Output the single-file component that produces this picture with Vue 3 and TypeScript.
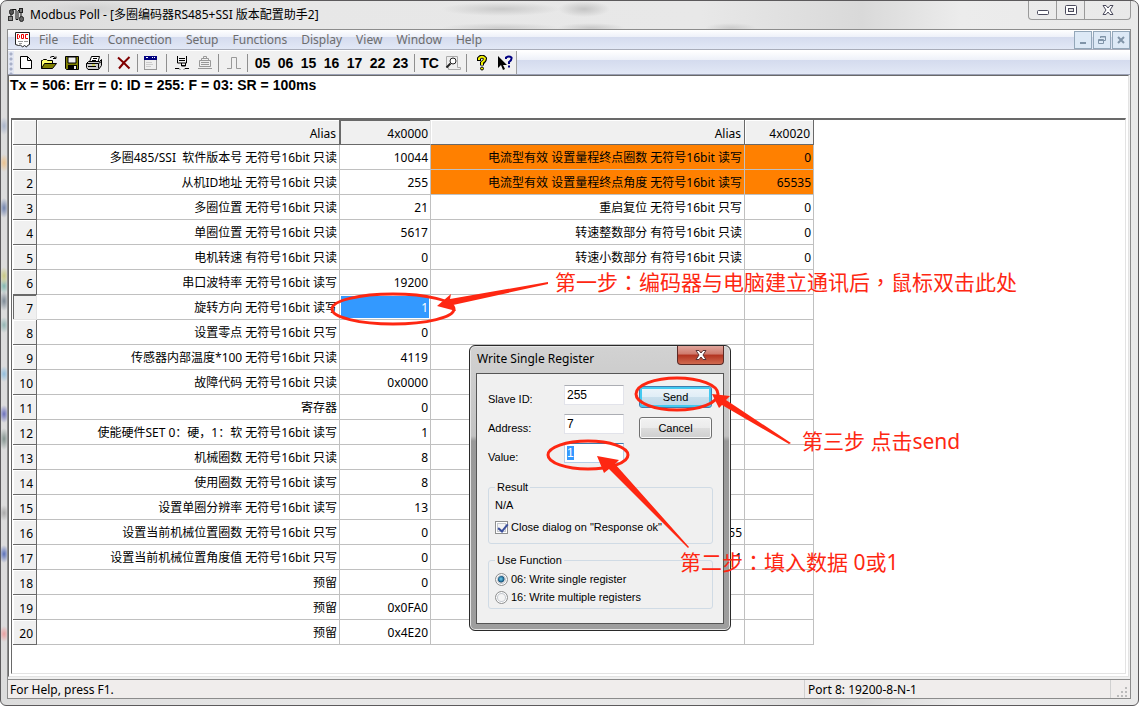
<script setup lang="ts">
import { ref } from 'vue'

interface Row {
  alias: string
  value: string
  alias2: string
  value2: string
  hot?: boolean
}

const menus: string[] = ['File', 'Edit', 'Connection', 'Setup', 'Functions', 'Display', 'View', 'Window', 'Help']
const functionCodes: string[] = ['05', '06', '15', '16', '17', '22', '23']

const row = (alias: string, value: string, alias2 = '', value2 = '', hot = false): Row => ({ alias, value, alias2, value2, hot })

const rows: Row[] = [
  row('多圈485/SSI  软件版本号 无符号16bit 只读', '10044', '电流型有效 设置量程终点圈数 无符号16bit 读写', '0', true),
  row('从机ID地址 无符号16bit 只读', '255', '电流型有效 设置量程终点角度 无符号16bit 读写', '65535', true),
  row('多圈位置 无符号16bit 只读', '21', '重启复位 无符号16bit 只写', '0'),
  row('单圈位置 无符号16bit 只读', '5617', '转速整数部分 有符号16bit 只读', '0'),
  row('电机转速 有符号16bit 只读', '0', '转速小数部分 有符号16bit 只读', '0'),
  row('串口波特率 无符号16bit 读写', '19200'),
  row('旋转方向 无符号16bit 读写', '1'),
  row('设置零点 无符号16bit 只写', '0'),
  row('传感器内部温度*100 无符号16bit 只读', '4119'),
  row('故障代码 无符号16bit 只读', '0x0000'),
  row('寄存器', '0'),
  row('使能硬件SET 0：硬，1：软 无符号16bit 读写', '1'),
  row('机械圈数 无符号16bit 只读', '8'),
  row('使用圈数 无符号16bit 读写', '8'),
  row('设置单圈分辨率 无符号16bit 读写', '13'),
  row('设置当前机械位置圈数 无符号16bit 只写', '0', '255'),
  row('设置当前机械位置角度值 无符号16bit 只写', '0', '1'),
  row('预留', '0'),
  row('预留', '0x0FA0'),
  row('预留', '0x4E20'),
]

const selectedRow = 6
const slaveId = ref('255')
const address = ref('7')
const registerValue = ref('1')
const closeOnOk = ref(true)
const writeMode = ref('06')
</script>

<template>
  <div class="window">
    <header class="titlebar">
      <svg class="app-icon" width="17" height="16" viewBox="0 0 17 16">
        <path d="M3 6v6M4 2.500h4v10h2V4M10 3.500h3v8" fill="none" stroke="#111" />
        <rect x="1.500" y="2.500" width="4" height="5" rx="2" fill="#555" stroke="#222" />
        <rect x=".5" y="9.500" width="4" height="4" fill="#888" stroke="#333" />
        <rect x="11.500" y="1.500" width="3" height="4" fill="#777" stroke="#222" />
        <rect x="11.500" y="9.500" width="4" height="5" rx="2" fill="#666" stroke="#222" />
      </svg>
      <h1>Modbus Poll - [多圈编码器RS485+SSI 版本配置助手2]</h1>
      <div class="caption-buttons">
        <button aria-label="Minimize">
          <svg width="14" height="14" viewBox="0 0 14 14"><rect x="1.500" y="7.500" width="11" height="4" rx="1" fill="#fff" stroke="#4a4a5c" /></svg>
        </button>
        <button aria-label="Restore">
          <svg width="14" height="14" viewBox="0 0 14 14"><rect x="1.500" y="2.500" width="11" height="9" rx="1" fill="#fff" stroke="#4a4a5c" /><rect x="4.500" y="5.500" width="5" height="3" fill="#ddd" stroke="#4a4a5c" /></svg>
        </button>
        <button class="wide" aria-label="Close">
          <svg width="14" height="14" viewBox="0 0 14 14"><path d="M2 2.500h3l2 2.500 2-2.500h3L9 7l3 4.500H9L7 9l-2 2.500H2L5 7z" fill="#fff" stroke="#4a4a5c" /></svg>
        </button>
      </div>
    </header>

    <main class="client">
      <nav class="menubar">
        <svg class="doc-icon" width="17" height="16" viewBox="0 0 17 16">
          <path d="M1.500.5h14v12l-2 1-1 1.500-2-1.500-2 1.500-2-2-2 .5-3-1z" fill="#fff" stroke="#222" />
          <path d="M3.500 2v5M3 2.500h1.500l1 1v2l-1 1H3M7.500 2.500h2v4h-2zM14 2.500h-2.500v4H14" fill="none" stroke="#e00" />
          <path d="M4 9.500h5M10 9.500h4M5 11.500h3" stroke="#999" />
        </svg>
        <button v-for="m in menus" :key="m">{{ m }}</button>
        <div class="mdi-buttons">
          <button aria-label="Minimize document"><svg width="10" height="10"><path d="M2 7h6v2H2z" fill="#8094a8" /></svg></button>
          <button aria-label="Restore document"><svg width="10" height="10"><path d="M3.500 3V1.500h5v4H7M1.500 4.500h5v4h-5zM1 5.500h6M3 2h6" fill="none" stroke="#8094a8" /></svg></button>
          <button aria-label="Close document"><svg width="10" height="10"><path d="M2 2l6 6M8 2L2 8" stroke="#8094a8" stroke-width="2" /></svg></button>
        </div>
      </nav>

      <div class="toolstrip">
        <div class="toolbar">
          <span class="grip"></span>
          <button aria-label="New"><svg width="16" height="16" viewBox="0 0 16 16"><path d="M2.500 1.500h7l4 4v8h-11zM9.500 1.500v4h4" fill="#fff" stroke="#000" /></svg></button>
          <button aria-label="Open"><svg width="16" height="16" viewBox="0 0 16 16"><path d="M.5 13.500v-8h1l1-1h3l1 1h5v3" fill="#ffff70" stroke="#000" /><path d="M.5 13.500l3-5h12l-4 5z" fill="#808000" stroke="#000" /><path d="M9 2.500l2-1h2l1.500 2M12 3.500h3v-2" fill="none" stroke="#000" /></svg></button>
          <button aria-label="Save"><svg width="16" height="16" viewBox="0 0 16 16"><path d="M1.500 1.500h13v13h-12l-1-1z" fill="#808000" stroke="#000" /><path d="M4 2h8v6H4z" fill="#f0f0f0" stroke="#000" /><path d="M4 10h9v4H4z" /><path d="M10 11h2v3h-2z" fill="#eee" /></svg></button>
          <button aria-label="Print"><svg width="17" height="16" viewBox="0 0 17 16"><path d="M3.500 7l2-5.500h8L12 7" fill="#fff" stroke="#000" /><path d="M7 3.500h4M6 5.500h4" stroke="#000" /><path d="M.5 8.500l2-2h11l2-2v6l-3 4H2l-1.500-2z" fill="#ccc" stroke="#000" /><path d="M.5 8.500h12v5M12.500 8.500l3-2M2 11.500h8" fill="none" stroke="#000" /><path d="M6 10h3" stroke="#cc0" /></svg></button>
          <span class="sep"></span>
          <button aria-label="Delete"><svg width="16" height="16" viewBox="0 0 16 16"><path d="M2 2.500l6 5.500 5.500 5.500M13.500 2L8 7.500l-5 6" fill="none" stroke="#800000" stroke-width="2" /></svg></button>
          <span class="sep"></span>
          <button class="left" aria-label="Display definition"><svg width="14" height="16" viewBox="0 0 14 16" shape-rendering="crispEdges"><path d="M.5 1.500h12v13H.5z" fill="#eee" stroke="#999" /><path d="M0 1h13v4H0z" fill="#000080" /><path d="M2 2h2v1H2zM8 2h1v1H8zM10 2h1v1h-1z" fill="#fff" /><path d="M2 7.500h6M2 9.500h7M2 11.500h5" stroke="#ccc" /></svg></button>
          <span class="sep"></span>
          <button aria-label="Connect"><svg width="16" height="16" viewBox="0 0 16 16"><path d="M3.500 1v7h9V1M5 3.500h6M5 5.500h6M7.500 8v3h4V8M7 10.500h4" fill="none" stroke="#000" /><path d="M1 13.500h4l1 1M15 13.500h-4l-1 1" fill="none" stroke="#000" /></svg></button>
          <button aria-label="Disconnect"><svg width="16" height="16" viewBox="0 0 16 16"><path d="M6.500 3V1.500h3V3M4.500 3.500h7v2h2v6h-11v-6h2zM4 5.500h8M4 7.500h8M4 9.500h8M1 13.500h14" fill="none" stroke="#999" /></svg></button>
          <span class="sep"></span>
          <button aria-label="Pulse"><svg width="16" height="16" viewBox="0 0 16 16"><path d="M1 13.500h4.500V2.500h5v11H15" fill="none" stroke="#999" /></svg></button>
          <span class="sep"></span>
          <button v-for="c in functionCodes" :key="c">{{ c }}</button>
          <span class="sep"></span>
          <button>TC</button>
          <button aria-label="Communication traffic"><svg width="16" height="16" viewBox="0 0 16 16"><path d="M1.500 1.500h11v11h3v2h-12v-2h-2z" fill="#eee" stroke="#aaa" /><circle cx="8" cy="6" r="3" fill="#fff" stroke="#222" /><path d="M5.500 8.500L1.500 12.500" stroke="#222" stroke-width="2" /></svg></button>
          <span class="sep"></span>
          <button aria-label="Help"><svg width="16" height="16" viewBox="0 0 16 16"><path d="M5 6V3.500Q8-.5 11 3.500 11 6 8 8v2.500" fill="none" stroke="#000" stroke-width="4" /><path d="M5 5V3.500Q8 0 11 3.500 11 5.500 8 7.500v2.500" fill="none" stroke="#ee0" stroke-width="2" /><circle cx="8" cy="13.500" r="1.500" fill="#ee0" stroke="#000" /></svg></button>
          <button aria-label="Context help"><svg width="16" height="16" viewBox="0 0 16 16"><path d="M1 1v12l3-3 2 5 2-1-2-4h4z" /><path d="M9 4V2.500Q12 .5 14.500 2.500 15 5 12 7v2M12 10.500v2" fill="none" stroke="#000080" stroke-width="2" /></svg></button>
        </div>
      </div>

      <section class="document">
        <p class="traffic">Tx = 506: Err = 0: ID = 255: F = 03: SR = 100ms</p>
        <div class="sheet">
          <table>
            <colgroup><col class="c-num" /><col class="c-alias" /><col class="c-val" /><col class="c-alias2" /><col class="c-val2" /></colgroup>
            <thead>
              <tr><th></th><th>Alias</th><th class="pressed">4x0000</th><th>Alias</th><th>4x0020</th></tr>
            </thead>
            <tbody>
              <tr v-for="(r, i) in rows" :key="i">
                <th :class="{ current: i === selectedRow }">{{ i + 1 }}</th>
                <td>{{ r.alias }}</td>
                <td :class="{ selected: i === selectedRow }">{{ r.value }}</td>
                <td :class="{ hot: r.hot }">{{ r.alias2 }}</td>
                <td :class="{ hot: r.hot }">{{ r.value2 }}</td>
              </tr>
            </tbody>
          </table>
        </div>
      </section>

      <footer class="statusbar">
        <span class="help">For Help, press F1.</span>
        <span class="port">Port 8: 19200-8-N-1</span>
        <svg width="12" height="12" viewBox="0 0 12 12"><path d="M9 2h2v2H9zM9 6h2v2H9zM9 10h2v2H9zM5 6h2v2H5zM5 10h2v2H5zM1 10h2v2H1z" fill="#bbb" /></svg>
      </footer>
    </main>

    <section class="dialog" role="dialog" aria-labelledby="dialog-title">
      <div class="dialog-title">
        <h2 id="dialog-title">Write Single Register</h2>
        <button aria-label="Close dialog"><svg width="14" height="12" viewBox="0 0 14 12"><path d="M2 1.500h3l2 2.500 2-2.500h3L9 6l3 4.500H9L7 8l-2 2.500H2L5 6z" fill="#fff" stroke="#5a3535" /></svg></button>
      </div>
      <form class="dialog-body" @submit.prevent>
        <div class="top">
          <div class="fields">
            <label for="slave">Slave ID:</label><input id="slave" v-model="slaveId" type="text" />
            <label for="addr">Address:</label><input id="addr" v-model="address" type="text" />
            <label for="val">Value:</label><input id="val" v-model="registerValue" class="active" type="text" />
          </div>
          <div class="actions">
            <button class="default" type="submit">Send</button>
            <button type="button">Cancel</button>
          </div>
        </div>
        <fieldset class="result">
          <legend>Result</legend>
          <p>N/A</p>
          <label><input v-model="closeOnOk" type="checkbox" />Close dialog on "Response ok"</label>
        </fieldset>
        <fieldset class="function">
          <legend>Use Function</legend>
          <label><input v-model="writeMode" type="radio" name="mode" value="06" />06: Write single register</label>
          <label><input v-model="writeMode" type="radio" name="mode" value="16" />16: Write multiple registers</label>
        </fieldset>
      </form>
    </section>

    <svg class="notes" width="1139" height="706" viewBox="0 0 1139 706">
      <g fill="none" stroke="#fe2712" stroke-width="3">
        <ellipse cx="393" cy="309" rx="61" ry="15" />
        <ellipse cx="677" cy="394" rx="41" ry="16" />
        <ellipse cx="588" cy="455" rx="40" ry="14" />
      </g>
      <g fill="#fe2712">
        <path d="M437 306L451 294 450 299 548 282 548 284 453 305 456 311z" />
        <path d="M712 394L730 396 726 400 791 443 789 444 722 405 719 408z" />
        <path d="M597 456L619 460 615 464 689 547 688 548 609 469 604 473z" />
        <text x="555" y="290">第一步<tspan class="mark">：</tspan>编码器与电脑建立通讯后<tspan class="mark">，</tspan>鼠标双击此处</text>
        <text x="802" y="449">第三步 点击send</text>
        <text x="680" y="570">第二步<tspan class="mark">：</tspan>填入数据 0或1</text>
      </g>
    </svg>
  </div>
</template>

<style>
body {
  margin: 0;
  background: #fff;
}
</style>

<style scoped>
* {
  box-sizing: border-box;
}
.window {
  position: relative;
  display: flex;
  flex-direction: column;
  min-height: 100vh;
  padding: 0 7px 6px 6px;
  border: 1px solid #5c5a5c;
  border-radius: 7px 7px 6px 6px;
  overflow: hidden;
  font: 12px/16px "Noto Sans", "Noto Sans CJK SC", sans-serif;
  color: #000;
  background:
    radial-gradient(ellipse 60px 7px at 500px 8px, #c9c9c9, transparent),
    radial-gradient(ellipse 26px 8px at 583px 8px, #c4c4c4, transparent),
    radial-gradient(ellipse 60px 5px at 500px 27px, #cdcdcd, transparent),
    radial-gradient(ellipse 34px 5px at 590px 27px, #c9c9c9, transparent),
    radial-gradient(ellipse 26px 5px at 730px 27px, #cdcdcd, transparent),
    radial-gradient(ellipse 50px 8px at 90px 8px, #d0d0d0, transparent),
    radial-gradient(5px 9px at 3px 125px, #a9b4ca, transparent),
    radial-gradient(5px 9px at 3px 162px, #ecc28e, transparent),
    radial-gradient(5px 10px at 3px 207px, #7183ad, transparent),
    radial-gradient(5px 9px at 3px 275px, #c9c982, transparent),
    radial-gradient(5px 8px at 3px 285px, #82b8b0, transparent),
    radial-gradient(5px 10px at 3px 300px, #7c8995, transparent),
    radial-gradient(5px 8px at 3px 324px, #93b6b4, transparent),
    radial-gradient(5px 8px at 3px 373px, #91bedd, transparent),
    radial-gradient(5px 9px at 3px 413px, #6b70bd, transparent),
    radial-gradient(5px 11px at 3px 438px, #83938f, transparent),
    radial-gradient(5px 8px at 3px 512px, #aaa, transparent),
    radial-gradient(5px 9px at 3px 553px, #5a70ba, transparent),
    radial-gradient(5px 8px at 3px 633px, #eaa0a0, transparent),
    linear-gradient(90deg, #dcdcdc 0, #e7e7e7 300px, #e8e8e8 700px, #d9d9d9 860px, #ececec 960px, #e9e9e9);
}
button {
  padding: 0;
  border: 0;
  background: none;
  font: inherit;
  color: inherit;
}
h1,
h2,
p {
  margin: 0;
  font: inherit;
}
.titlebar {
  display: flex;
  align-items: center;
  height: 28px;
  padding-left: 1px;
}
.titlebar h1 {
  margin-left: 5px;
  flex: 1;
}
.caption-buttons {
  display: flex;
  align-self: flex-start;
  height: 19px;
  border: 1px solid #9a9a9a;
  border-top: 0;
  border-radius: 0 0 4px 4px;
}
.caption-buttons button {
  display: flex;
  align-items: center;
  justify-content: center;
  width: 28px;
  border-right: 1px solid #9a9a9a;
}
.caption-buttons .wide {
  width: 45px;
  border-right: 0;
}
.client {
  flex: 1;
  display: flex;
  flex-direction: column;
  border: 1px solid #8c8c8c;
  background: #f0f0f0;
}
.menubar {
  display: flex;
  align-items: center;
  height: 20px;
  padding-left: 6px;
  border-bottom: 1px solid #a9adba;
  background: linear-gradient(#fff 0, #eef1f9 35%, #d4dbee 36%, #e2e8f6 100%);
  color: #6d6d6d;
}
.doc-icon {
  margin-right: 1px;
}
.menubar > button {
  padding: 1px 7px 0;
}
.mdi-buttons {
  display: flex;
  gap: 1px;
  margin-left: auto;
}
.mdi-buttons button {
  display: flex;
  align-items: center;
  justify-content: center;
  width: 18px;
  height: 18px;
  border: 1px solid #93a7b9;
  background: #dde9f6;
}
.toolstrip {
  display: flex;
  height: 25px;
  border-top: 1px solid #fff;
  border-bottom: 1px solid #9aa0b4;
  background: linear-gradient(#fff 0, #eef1f9 38%, #d4dbee 39%, #e2e8f6 100%);
}
.toolbar {
  display: flex;
  align-items: center;
  border-right: 1px solid #a0a0a0;
  background: #f0f0f0;
  font: bold 14px/16px "Liberation Sans", Arial, sans-serif;
}
.grip {
  width: 6px;
  align-self: stretch;
  background: radial-gradient(circle at 3px 3px, #a8b0c8 1px, transparent 2px) 0 0 / 7px 5px, #e2e6f2;
}
.toolbar button {
  display: flex;
  justify-content: center;
  width: 23px;
}
.toolbar .left {
  justify-content: flex-start;
  padding-left: 3px;
}
.sep {
  width: 1px;
  height: 18px;
  margin: 0 3px 0 2px;
  background: #8f8f8f;
}
.document {
  flex: 1;
  display: flex;
  flex-direction: column;
  margin-right: 1px;
  border: 1px solid #696969;
  border-right-color: #e3e3e3;
  border-bottom-color: #e3e3e3;
  background: #fff;
}
.traffic {
  height: 42px;
  padding-left: 1px;
  font: bold 14px/18px "Liberation Sans", Arial, sans-serif;
}
.sheet {
  flex: 1;
  margin: 0 2px 2px;
  padding-left: 1px;
  border-top: 2px solid #696969;
  border-left: 1px solid #696969;
  border-right: 1px solid #e3e3e3;
  border-bottom: 1px solid #e3e3e3;
}
table {
  table-layout: fixed;
  width: 801px;
  border-spacing: 0;
}
.c-num { width: 24px; }
.c-alias { width: 303px; }
.c-val { width: 91px; }
.c-alias2 { width: 314px; }
.c-val2 { width: 69px; }
th,
td {
  height: 25px;
  padding: 2px 2px 0;
  text-align: right;
  font-weight: 400;
  white-space: pre;
  border-right: 1px solid #c0c0c0;
  border-bottom: 1px solid #c0c0c0;
}
th {
  padding: 4px 3px 0;
  background: #f0f0f0;
  border-right-color: #696969;
  border-bottom-color: #696969;
  box-shadow: inset 1px 1px #fff;
}
thead .pressed {
  padding-right: 2px;
  border-right-color: #e3e3e3;
  box-shadow: inset 1px 1px #696969;
}
tbody .current {
  border-right-color: #e3e3e3;
  border-bottom-color: #e3e3e3;
  box-shadow: inset 1px 1px #696969;
}
.hot {
  background: #ff8000;
}
.selected {
  color: #fff;
  background: #3399ff;
  box-shadow: inset 0 0 0 1px #fff;
}
.statusbar {
  display: flex;
  align-items: center;
  height: 19px;
  margin-top: 2px;
  border-top: 1px solid #8c8c8c;
  background: #f0edec;
}
.help {
  flex: 1;
  padding: 2px 0 0 2px;
}
.port {
  width: 307px;
  padding: 2px 0 0 3px;
  border-left: 1px solid #d0d0d0;
  border-right: 1px solid #d0d0d0;
}
.statusbar svg {
  align-self: flex-end;
  margin: 0 2px 1px 5px;
}
.dialog {
  position: absolute;
  left: 468px;
  top: 344px;
  width: 262px;
  padding: 0 6px 6px;
  border: 1px solid #2a2a2a;
  border-radius: 6px;
  background: linear-gradient(#d2d2d2, #c2c2c2 90px, #999 95px, #9e9e9e);
  box-shadow: inset 0 0 0 1px #e6e6e6;
  font: 11px/14px "Liberation Sans", Arial, sans-serif;
}
.dialog-title {
  display: flex;
  justify-content: space-between;
  height: 27px;
  font: 12px/16px "Noto Sans", sans-serif;
}
.dialog-title h2 {
  padding: 5px 0 0 1px;
}
.dialog-title button {
  display: flex;
  align-items: center;
  justify-content: center;
  width: 47px;
  height: 19px;
  border: 1px solid #5a2a26;
  border-top: 0;
  border-radius: 0 0 4px 4px;
  background: linear-gradient(#e0a59c, #cf7a6c 45%, #b23320 50%, #d06a50);
}
.dialog-body {
  padding: 11px 11px 14px;
  border: 1px solid #555;
  background: #f0f0f0;
}
.top {
  display: flex;
  justify-content: space-between;
}
.fields {
  display: grid;
  grid-template-columns: 76px 60px;
  grid-auto-rows: 20px;
  row-gap: 9px;
}
.fields label {
  padding-top: 7px;
}
.fields input {
  width: 60px;
  height: 20px;
  padding: 0 2px;
  border: 1px solid #e2e3ea;
  border-top-color: #abadb3;
  background: #fff;
  font: 12px/14px "Liberation Sans", Arial, sans-serif;
  color: #000;
}
.fields .active {
  border-color: #b5cfe7;
  border-top-color: #3d7bad;
  color: #fff;
  background: linear-gradient(#3399ff, #3399ff) 2px 2px / 7px 14px no-repeat #fff;
}
.actions {
  display: flex;
  flex-direction: column;
  gap: 9px;
  padding-top: 1px;
}
.actions button {
  width: 73px;
  height: 22px;
  border: 1px solid #707070;
  border-radius: 3px;
  background: linear-gradient(#f2f2f2, #ebebeb 49%, #dddddd 50%, #cfcfcf);
  box-shadow: inset 0 0 0 1px #fafafa;
}
.actions .default {
  border-color: #3c7fb1;
  background: linear-gradient(#eef5fa, #e0eef7 49%, #cbe0ed 50%, #bcd6e6);
  box-shadow: inset 0 0 0 2px #43c9f0;
}
fieldset {
  display: flex;
  flex-direction: column;
  width: 225px;
  margin: 0;
  padding: 0 6px;
  border: 1px solid #d0dbe5;
  border-radius: 3px;
}
legend {
  padding: 0 2px;
}
.result {
  height: 64px;
  margin-top: 17px;
}
.result p {
  padding: 4px 0 8px;
}
.function {
  height: 56px;
  margin-top: 9px;
}
.function label {
  height: 18px;
}
.function label:first-of-type {
  margin-top: 3px;
}
fieldset label {
  display: flex;
  align-items: center;
}
fieldset input {
  appearance: none;
  width: 13px;
  height: 13px;
  margin: 0 3px 0 0;
  border: 1px solid #8e8f8f;
  background: #f4f4f4;
  box-shadow: inset 0 0 0 1px #fff, inset 0 0 0 2px #c5c9cf;
}
input[type='radio'] {
  border-radius: 50%;
}
input[type='radio']:checked {
  background: radial-gradient(circle at 5px 5px, #6cd0f4 0, #175780 3px, #0d2f4a 3px, #f4f4f4 4px);
}
input[type='checkbox']:checked::before {
  content: '';
  display: block;
  width: 4px;
  height: 8px;
  margin-left: 4px;
  border: solid #3b4f9c;
  border-width: 0 2px 2px 0;
  transform: rotate(40deg);
}
.notes {
  position: absolute;
  left: -1px;
  top: -1px;
  pointer-events: none;
  font-size: 21px;
}
.mark {
  font-family: "Noto Sans CJK TC", sans-serif;
}
</style>
